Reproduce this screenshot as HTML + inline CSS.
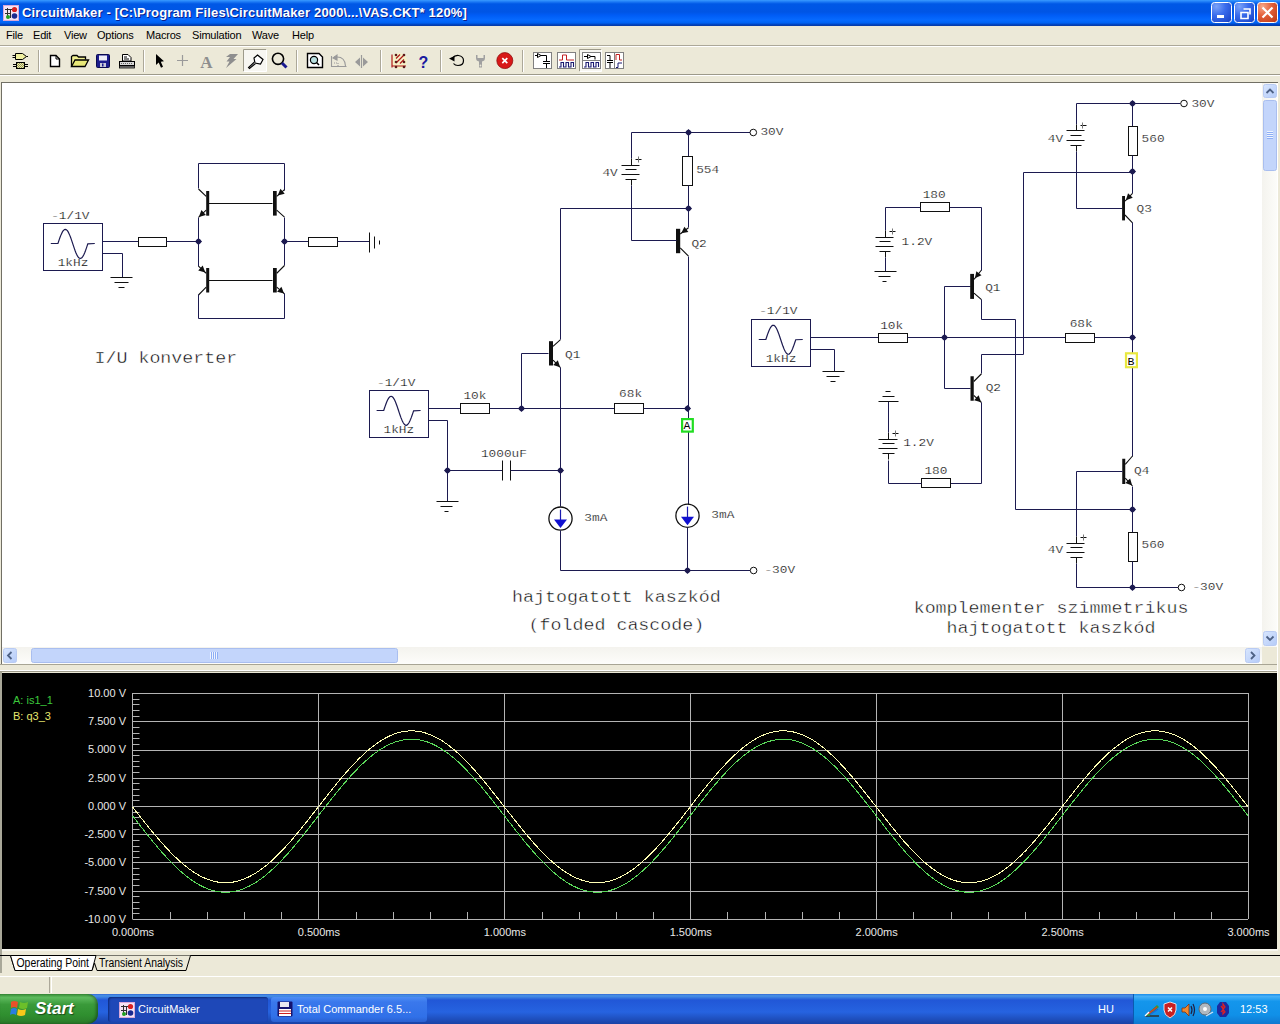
<!DOCTYPE html>
<html><head><meta charset="utf-8">
<style>
*{margin:0;padding:0;box-sizing:border-box}
html,body{width:1280px;height:1024px;overflow:hidden;background:#ECE9D8;font-family:"Liberation Sans",sans-serif;}
.abs{position:absolute}
#title{left:0;top:0;width:1280px;height:26px;background:linear-gradient(#3A9BFF 0%,#1D7AF5 7%,#0058E6 15%,#0055E5 46%,#005CF5 58%,#066AFF 77%,#0062F2 88%,#0046C4 94%,#0838A0 100%);}
#title .t{left:22px;top:5px;color:#fff;font-size:13px;font-weight:bold;letter-spacing:0.16px;text-shadow:1px 1px 0 #0A1E8C;white-space:nowrap}
.tb{top:2px;width:21px;height:21px;border:1px solid #fff;border-radius:3px;}
#menu{left:0;top:26px;width:1280px;height:20px;}
#menu span{position:absolute;top:3px;font-size:11px;letter-spacing:-0.2px;color:#000}
#toolbar{left:0;top:46px;width:1280px;height:29px;border-top:1px solid #fff;}
.sep{top:50px;width:2px;height:21px;border-left:1px solid #ACA899;border-right:1px solid #fff}
#canvas{left:1px;top:82px;width:1277px;height:583px;background:#fff;border-top:1px solid #716F64;border-left:1px solid #716F64}
#wave{left:2px;top:673px;width:1275px;height:276px;background:#000;overflow:hidden}
#taskbar{left:0;top:994px;width:1280px;height:30px;background:linear-gradient(#3168D5 0%,#4993E6 6%,#2157D7 20%,#2663E0 60%,#1941A5 100%)}
</style></head><body>
<div id="title" class="abs">
  <svg class="abs" style="left:3px;top:5px" width="16" height="16">
<rect x="0" y="0" width="16" height="16" fill="#F4E4F4"/><rect x="0.5" y="0.5" width="15" height="15" fill="none" stroke="#D8A8D8"/>
<path d="M2 4.5 H10 M4.5 3 V13 M7.5 4.5 V13 M2 8.5 H7" stroke="#303030" stroke-width="1"/>
<circle cx="11.5" cy="4.5" r="2.6" fill="#D82020"/><circle cx="11.5" cy="11" r="2.8" fill="#1A2A90"/><circle cx="5" cy="12" r="2" fill="#20A020"/>
</svg>
  <div class="t abs">CircuitMaker - [C:\Program Files\CircuitMaker 2000\...\VAS.CKT* 120%]</div>
  <svg class="abs" style="left:1210px;top:1px" width="70" height="24">
  <defs>
   <radialGradient id="bb" cx="0.25" cy="0.2" r="1"><stop offset="0" stop-color="#7AA2F8"/><stop offset="0.45" stop-color="#3A6CEC"/><stop offset="1" stop-color="#1A44C8"/></radialGradient>
   <radialGradient id="rb" cx="0.25" cy="0.2" r="1"><stop offset="0" stop-color="#F8A888"/><stop offset="0.45" stop-color="#E4603A"/><stop offset="1" stop-color="#C03C18"/></radialGradient>
  </defs>
  <rect x="1.5" y="1.5" width="20" height="20" rx="3" fill="url(#bb)" stroke="#fff"/>
  <rect x="7" y="14" width="7" height="3" fill="#fff"/>
  <rect x="24.5" y="1.5" width="20" height="20" rx="3" fill="url(#bb)" stroke="#fff"/>
  <path d="M31 11.5 h7 v6 h-7 z" fill="none" stroke="#fff" stroke-width="1.6"/>
  <path d="M33.5 8 h6.5 v5.5" fill="none" stroke="#fff" stroke-width="1.6"/>
  <rect x="47.5" y="1.5" width="20" height="20" rx="3" fill="url(#rb)" stroke="#fff"/>
  <path d="M52.5 6.5 L62.5 16.5 M62.5 6.5 L52.5 16.5" stroke="#fff" stroke-width="2.2"/>
  </svg>
</div>
<div id="menu" class="abs">
  <span style="left:6px">File</span>
  <span style="left:33px">Edit</span>
  <span style="left:64px">View</span>
  <span style="left:97px">Options</span>
  <span style="left:146px">Macros</span>
  <span style="left:192px">Simulation</span>
  <span style="left:252px">Wave</span>
  <span style="left:292px">Help</span>
</div>
<div class="abs" style="left:0;top:45px;width:1280px;height:1px;background:#ACA899"></div>
<div id="toolbar" class="abs"></div>
<svg class="abs" style="left:0;top:0" width="640" height="80">
<defs>
<pattern id="chk" width="2" height="2" patternUnits="userSpaceOnUse"><rect width="2" height="2" fill="#F0F0A0"/><rect width="1" height="1" fill="#909060"/><rect x="1" y="1" width="1" height="1" fill="#909060"/></pattern>
</defs>
<!-- grip / separators -->
<g stroke-width="1">
<path d="M38.5 50 V72" stroke="#ACA899"/><path d="M39.5 50 V72" stroke="#fff"/>
<path d="M143.5 50 V72" stroke="#ACA899"/><path d="M144.5 50 V72" stroke="#fff"/>
<path d="M296.5 50 V72" stroke="#ACA899"/><path d="M297.5 50 V72" stroke="#fff"/>
<path d="M380.5 50 V72" stroke="#ACA899"/><path d="M381.5 50 V72" stroke="#fff"/>
<path d="M440.5 50 V72" stroke="#ACA899"/><path d="M441.5 50 V72" stroke="#fff"/>
<path d="M522.5 50 V72" stroke="#ACA899"/><path d="M523.5 50 V72" stroke="#fff"/>
</g>
<!-- pressed buttons -->
<rect x="243.5" y="49.5" width="23" height="22" fill="#F7F6F1" stroke="none"/>
<path d="M243.5 71.5 V49.5 H266.5" stroke="#9D9A8A" fill="none"/>
<path d="M243.5 71.5 H266.5 V49.5" stroke="#fff" fill="none"/>
<rect x="579.5" y="49.5" width="22" height="22" fill="#F7F6F1" stroke="none"/>
<path d="M579.5 71.5 V49.5 H601.5" stroke="#9D9A8A" fill="none"/>
<path d="M579.5 71.5 H601.5 V49.5" stroke="#fff" fill="none"/>
<!-- 1 components -->
<g stroke="#000" stroke-width="1">
<path d="M15.5 53.5 H22.5 L26.5 56.5 L22.5 59.5 H15.5 Z" fill="#F0F0A0"/>
<path d="M12.5 55.5 H15 M12.5 57.5 H15 M26.5 56.5 H28" />
<rect x="16.5" y="62.5" width="8" height="6" fill="url(#chk)"/>
<path d="M13 64.5 H16 M13 66.5 H16 M25 64.5 H28 M25 66.5 H28"/>
</g>
<!-- 2 new doc -->
<path d="M50.5 55.5 H56 L59.5 59 V66.5 H50.5 Z" fill="#fff" stroke="#000" stroke-width="1.4"/>
<path d="M56 55.5 V59 H59.5" fill="none" stroke="#000"/>
<!-- 3 folder -->
<path d="M71.5 66.5 V56.5 L73 55.5 H77 L78.5 57 H85.5 V59.5" fill="#F0F090" stroke="#000" stroke-width="1.3"/>
<path d="M71.5 66.5 L75 60 H88.5 L85 66.5 Z" fill="#E8E878" stroke="#000" stroke-width="1.3"/>
<!-- 4 floppy -->
<rect x="96.5" y="54.5" width="13" height="13" rx="1" fill="#1C1C8C" stroke="#0A0A50"/>
<rect x="99" y="55.5" width="8" height="5" fill="#EEEEF8"/>
<rect x="100" y="63" width="6" height="4" fill="#C8C8D8"/>
<rect x="102" y="63.5" width="1.5" height="3" fill="#1C1C8C"/>
<!-- 5 printer -->
<path d="M122.5 54.5 H128 L131 57.5 V61 H122.5 Z" fill="#fff" stroke="#000"/>
<path d="M124 57 H127 M124 59 H129" stroke="#000"/>
<rect x="119.5" y="61.5" width="15" height="4" fill="#D8D8D8" stroke="#000"/>
<path d="M121 63.5 H133" stroke="#666" stroke-dasharray="1 1"/>
<rect x="119.5" y="66" width="15" height="2" fill="#999" stroke="#000" stroke-width=".8"/>
<!-- 6 arrow -->
<path d="M156 54 L156 65 L158.7 62.5 L161 67.8 L163 66.8 L160.8 61.8 L164 61.3 Z" fill="#000"/>
<!-- 7 plus -->
<path d="M177 60.5 H188 M182.5 55 V66" stroke="#9A9A9A" stroke-width="1.2"/>
<!-- 8 A -->
<text x="206.5" y="68" text-anchor="middle" font-family="Liberation Serif" font-weight="bold" font-size="17" fill="#8E8E8E">A</text>
<!-- 9 lightning -->
<path d="M230 54 H238 L233.5 59 H236.5 L226 68 L229.5 61.5 H226.5 L230 57 H226 Z" fill="#8E8E8E"/>
<!-- 10 probe -->
<path d="M257.5 55 L263 59.5 L260.5 64 L255 63 L254 58 Z" fill="#fff" stroke="#000" stroke-width="1.2"/>
<path d="M255.5 63.5 L249.5 68.5 L248.5 67.5 L254.5 62" fill="#fff" stroke="#000" stroke-width="1.1"/>
<!-- 11 magnifier -->
<circle cx="278" cy="58.8" r="5.6" fill="none" stroke="#000" stroke-width="1.6"/>
<path d="M282 63 L286.5 67.5" stroke="#1A1A90" stroke-width="3"/>
<!-- 12 zoom page -->
<path d="M307.5 53.5 H319 L322.5 57 V67.5 H307.5 Z" fill="#fff" stroke="#000" stroke-width="1.4"/>
<circle cx="314" cy="60" r="3.6" fill="#B8E0E0" stroke="#000" stroke-width="1.2"/>
<path d="M316.5 62.5 L319 65" stroke="#000" stroke-width="1.6"/>
<!-- 13 rotate gray -->
<g stroke="#9A9A9A" fill="none" stroke-width="1.1">
<path d="M331.5 56 V66.5 H346.5"/>
<path d="M334 57 H337 Q345 57 345.5 66"/>
<path d="M333 58 L337 55 L337 60 Z" fill="#9A9A9A"/>
<path d="M334 63 H338 V66" stroke-dasharray="1 1"/>
</g>
<!-- 14 mirror gray -->
<path d="M361.5 55 V68" stroke="#9A9A9A" stroke-width="1.2"/>
<path d="M360 57.5 L355 62 L360 66.5 Z M363 57.5 L368 62 L363 66.5 Z" fill="#9A9A9A"/>
<!-- 15 netlist -->
<circle cx="399" cy="61" r="8" fill="#F8F4C0" opacity=".7"/>
<g stroke="#B01818" stroke-width="1.2" fill="none">
<path d="M392 54.5 V67.5 M392 66 H406 M396 63 L404 55 M396 58.5 L400 54.5 M400 63.5 L404 59.5"/>
</g>
<g fill="#5A1A1A"><circle cx="396" cy="55" r="1.3"/><circle cx="404" cy="55" r="1.3"/><circle cx="396" cy="62" r="1.3"/><circle cx="404" cy="62" r="1.3"/><circle cx="396" cy="67" r="1.3"/><circle cx="404" cy="67" r="1.3"/></g>
<!-- 16 ? -->
<text x="423.5" y="67.5" text-anchor="middle" font-family="Liberation Sans" font-weight="bold" font-size="16" fill="#1A1AA0">?</text>
<!-- 17 undo -->
<path d="M452 58.5 Q455 55 458.5 55.5 Q463.5 56.5 463.5 60.5 Q463.5 65.5 458 65.5 Q455 65.5 453.5 63.5" fill="none" stroke="#000" stroke-width="1.2"/>
<path d="M449 58.5 L454.5 56 L454.5 61.5 Z" fill="#000"/>
<!-- 18 wrench gray -->
<path d="M476 55 V58 Q476 61 479 61.5 V67.5 H482 V61.5 Q485 61 485 58 V55 L483.5 55 V58 H477.5 V55 Z" fill="#A0A0A0"/>
<circle cx="480.5" cy="65.5" r=".9" fill="#ECE9D8"/>
<!-- 19 stop -->
<circle cx="504.8" cy="60.6" r="8" fill="#D81818"/>
<circle cx="504.8" cy="60.6" r="8" fill="none" stroke="#901010" stroke-width=".8"/>
<path d="M502.3 58.1 L507.3 63.1 M507.3 58.1 L502.3 63.1" stroke="#fff" stroke-width="1.7"/>
<!-- 20 box schematic -->
<rect x="533.5" y="52.5" width="18" height="16" fill="#fff" stroke="#808080"/>
<g stroke="#000" fill="none" stroke-width="1">
<path d="M535 55.5 H537.5 M537.5 53.5 V57.5 L541 55.5 L537.5 53.5 M541 55.5 H546.5 V61 M543 61.5 H550 M543 63.5 H550 M546.5 63.5 V68"/>
</g>
<!-- 21 pulses -->
<rect x="557.5" y="52.5" width="18" height="16" fill="#fff" stroke="#808080"/>
<path d="M559 60 H562.5 V55 H566.5 V60 H574" stroke="#C02020" fill="none"/>
<path d="M559 67 H561 V62.5 H563.5 V67 H566 V62.5 H568.5 V67 H571 V62.5 H573.5 V67" stroke="#1A1A70" fill="none" stroke-width="1.1"/>
<!-- 22 pressed: gate + pulses -->
<rect x="582.5" y="52.5" width="18" height="16" fill="#fff" stroke="#808080"/>
<path d="M582.5 60.5 H600.5" stroke="#808080"/>
<path d="M584 56.5 H587.5 M587.5 54.5 V58.5 L591 56.5 L587.5 54.5 M591 56.5 H595 V59.5" stroke="#000" fill="none"/>
<path d="M584 67 H586 V62.5 H588.5 V67 H591 V62.5 H593.5 V67 H596 V62.5 H598.5 V67" stroke="#1A1A70" fill="none" stroke-width="1.1"/>
<!-- 23 cap + pulse -->
<rect x="605.5" y="52.5" width="18" height="16" fill="#fff" stroke="#808080"/>
<path d="M614.5 52.5 V68.5" stroke="#808080"/>
<path d="M607 55.5 H610 V60 M607 60.5 H613 M607 62.5 H613 M610 62.5 V68" stroke="#000" fill="none"/>
<path d="M616 60 V54.5 H619.5 V60 H622" stroke="#C02020" fill="none"/>
<path d="M616 67.5 H618 V63 H622" stroke="#1A1A70" fill="none"/>
</svg>

<div class="abs" style="left:0;top:74px;width:1280px;height:1px;background:#9D9A8A"></div><div class="abs" style="left:0;top:75px;width:1280px;height:1px;background:#fff"></div>
<div id="canvas" class="abs"></div>
<svg class="abs" style="left:0;top:0" width="1262" height="647"><g fill="none" stroke-width="1" font-family="Liberation Mono"><rect x="43.5" y="223.5" width="59.0" height="47.0" fill="none" stroke="#1C1A50"/><path d="M50.8 243.5 L57.8 243.5 L57.80 243.90 L58.55 241.63 L59.30 239.42 L60.05 237.32 L60.80 235.38 L61.55 233.65 L62.30 232.17 L63.05 230.98 L63.80 230.11 L64.55 229.58 L65.30 229.40 L66.05 229.58 L66.80 230.11 L67.55 230.98 L68.30 232.17 L69.05 233.65 L69.80 235.38 L70.55 237.32 L71.30 239.42 L72.05 241.63 L72.80 243.90 L73.55 246.17 L74.30 248.38 L75.05 250.48 L75.80 252.42 L76.55 254.15 L77.30 255.63 L78.05 256.82 L78.80 257.69 L79.55 258.22 L80.30 258.40 L81.05 258.22 L81.80 257.69 L82.55 256.82 L83.30 255.63 L84.05 254.15 L84.80 252.42 L85.55 250.48 L86.30 248.38 L87.05 246.17 L87.80 243.90 L94.8 243.5" stroke="#1C1A50" stroke-width="1.2"/><text transform="translate(51.20 218.6) scale(1 0.9)" font-size="12.8" fill="#0A0A0A" stroke="#fff" stroke-width="0.25">-1/1V</text><text transform="translate(57.70 266.4) scale(1 0.9)" font-size="12.8" fill="#0A0A0A" stroke="#fff" stroke-width="0.25">1kHz</text><path d="M102.5 241.5 L138.5 241.5" stroke="#1C1A50"/><rect x="138.5" y="237.5" width="28.0" height="9.0" fill="#fff" stroke="#101010"/><path d="M166.5 241.5 L198.5 241.5" stroke="#1C1A50"/><path d="M102.5 253.5 L122.5 253.5 L122.5 277.5" stroke="#1C1A50"/><path d="M110.5 277.5 L132.5 277.5" stroke="#101010"/><path d="M114.5 282.5 L128.5 282.5" stroke="#101010"/><path d="M118.5 287.5 L124.5 287.5" stroke="#101010"/><path d="M198.5 163.5 L284.5 163.5" stroke="#1C1A50"/><path d="M198.5 163.5 L198.5 188.5" stroke="#1C1A50"/><path d="M284.5 163.5 L284.5 190.5" stroke="#1C1A50"/><rect x="206.20" y="191.00" width="3.00" height="24.70" fill="#101010"/><path d="M206.20 196.35 L198.5 189.00 M206.20 210.15 L198.5 217.30" stroke="#101010" stroke-width="1.1"/><path d="M198.88 216.94 L201.40 210.10 L205.89 214.94 Z" fill="#101010" stroke="none"/><rect x="273.00" y="191.00" width="3.70" height="24.60" fill="#101010"/><path d="M276.70 196.30 L284.5 189.70 M276.70 210.10 L284.5 217.10" stroke="#101010" stroke-width="1.1"/><path d="M277.64 195.51 L284.73 193.83 L280.47 188.79 Z" fill="#101010" stroke="none"/><path d="M208.5 203.5 L272.5 203.5" stroke="#101010"/><path d="M198.5 217.5 L198.5 266.5" stroke="#1C1A50"/><path d="M284.5 217.5 L284.5 265.5" stroke="#1C1A50"/><path d="M194.9 241.5 L198.5 237.9 L202.1 241.5 L198.5 245.1 Z" fill="#1C1A50" stroke="none"/><circle cx="198.5" cy="241.5" r="2.4" fill="#1C1A50"/><path d="M280.9 241.5 L284.5 237.9 L288.1 241.5 L284.5 245.1 Z" fill="#1C1A50" stroke="none"/><circle cx="284.5" cy="241.5" r="2.4" fill="#1C1A50"/><rect x="206.20" y="268.00" width="3.00" height="24.50" fill="#101010"/><path d="M206.20 273.25 L198.5 266.20 M206.20 287.05 L198.5 295.00" stroke="#101010" stroke-width="1.1"/><path d="M205.28 272.40 L202.71 265.58 L198.25 270.45 Z" fill="#101010" stroke="none"/><rect x="273.00" y="268.00" width="3.75" height="24.50" fill="#101010"/><path d="M276.75 273.25 L284.5 265.50 M276.75 287.05 L284.5 293.80" stroke="#101010" stroke-width="1.1"/><path d="M284.11 293.46 L277.04 291.68 L281.38 286.70 Z" fill="#101010" stroke="none"/><path d="M208.5 280.5 L272.5 280.5" stroke="#101010"/><path d="M198.5 294.5 L198.5 318.5 L284.5 318.5 L284.5 293.5" stroke="#1C1A50"/><path d="M284.5 241.5 L308.5 241.5" stroke="#1C1A50"/><rect x="308.5" y="237.5" width="29.0" height="9.0" fill="#fff" stroke="#101010"/><path d="M337.5 241.5 L369.5 241.5" stroke="#1C1A50"/><path d="M369.5 232.5 L369.5 252.5" stroke="#101010"/><path d="M374.5 236.5 L374.5 248.5" stroke="#101010"/><path d="M379.5 240.5 L379.5 244.5" stroke="#101010"/><text transform="translate(94.40 363) scale(1 0.89)" font-size="18.33" fill="#0A0A0A" stroke="#fff" stroke-width="0.45">I/U konverter</text><rect x="369.5" y="390.5" width="59.0" height="47.0" fill="none" stroke="#1C1A50"/><path d="M376.6 410.5 L383.6 410.5 L383.60 410.80 L384.35 408.53 L385.10 406.32 L385.85 404.22 L386.60 402.28 L387.35 400.55 L388.10 399.07 L388.85 397.88 L389.60 397.01 L390.35 396.48 L391.10 396.30 L391.85 396.48 L392.60 397.01 L393.35 397.88 L394.10 399.07 L394.85 400.55 L395.60 402.28 L396.35 404.22 L397.10 406.32 L397.85 408.53 L398.60 410.80 L399.35 413.07 L400.10 415.28 L400.85 417.38 L401.60 419.32 L402.35 421.05 L403.10 422.53 L403.85 423.72 L404.60 424.59 L405.35 425.12 L406.10 425.30 L406.85 425.12 L407.60 424.59 L408.35 423.72 L409.10 422.53 L409.85 421.05 L410.60 419.32 L411.35 417.38 L412.10 415.28 L412.85 413.07 L413.60 410.80 L420.6 410.5" stroke="#1C1A50" stroke-width="1.2"/><text transform="translate(377.00 385.5) scale(1 0.9)" font-size="12.8" fill="#0A0A0A" stroke="#fff" stroke-width="0.25">-1/1V</text><text transform="translate(383.50 433.3) scale(1 0.9)" font-size="12.8" fill="#0A0A0A" stroke="#fff" stroke-width="0.25">1kHz</text><path d="M428.5 408.5 L460.5 408.5" stroke="#1C1A50"/><rect x="460.5" y="403.5" width="29.0" height="10.0" fill="#fff" stroke="#101010"/><text transform="translate(463.40 398.7) scale(1 0.9)" font-size="12.8" fill="#0A0A0A" stroke="#fff" stroke-width="0.25">10k</text><path d="M489.5 408.5 L614.5 408.5" stroke="#1C1A50"/><rect x="614.5" y="403.5" width="29.0" height="10.0" fill="#fff" stroke="#101010"/><text transform="translate(619.10 397.3) scale(1 0.9)" font-size="12.8" fill="#0A0A0A" stroke="#fff" stroke-width="0.25">68k</text><path d="M643.5 408.5 L687.5 408.5" stroke="#1C1A50"/><path d="M517.9 408.5 L521.5 404.9 L525.1 408.5 L521.5 412.1 Z" fill="#1C1A50" stroke="none"/><circle cx="521.5" cy="408.5" r="2.4" fill="#1C1A50"/><path d="M521.5 408.5 L521.5 353.5 L548.5 353.5" stroke="#1C1A50"/><rect x="549.00" y="341.20" width="4.00" height="24.30" fill="#101010"/><path d="M553.00 346.35 L560.5 339.60 M553.00 360.15 L560.5 367.60" stroke="#101010" stroke-width="1.1"/><path d="M560.12 367.23 L553.19 364.99 L557.84 360.31 Z" fill="#101010" stroke="none"/><text transform="translate(565.00 358.4) scale(1 0.9)" font-size="12.8" fill="#0A0A0A" stroke="#fff" stroke-width="0.25">Q1</text><path d="M560.5 339.5 L560.5 208.5 L688.5 208.5" stroke="#1C1A50"/><path d="M684.9 208.5 L688.5 204.9 L692.1 208.5 L688.5 212.1 Z" fill="#1C1A50" stroke="none"/><circle cx="688.5" cy="208.5" r="2.4" fill="#1C1A50"/><path d="M560.5 367.5 L560.5 506.5" stroke="#1C1A50"/><path d="M556.9 470.5 L560.5 466.9 L564.1 470.5 L560.5 474.1 Z" fill="#1C1A50" stroke="none"/><circle cx="560.5" cy="470.5" r="2.4" fill="#1C1A50"/><path d="M428.5 420.5 L447.5 420.5 L447.5 501.5" stroke="#1C1A50"/><path d="M436.5 501.5 L458.5 501.5" stroke="#101010"/><path d="M440.5 506.5 L452.5 506.5" stroke="#101010"/><path d="M444.5 511.5 L448.5 511.5" stroke="#101010"/><path d="M443.9 470.5 L447.5 466.9 L451.1 470.5 L447.5 474.1 Z" fill="#1C1A50" stroke="none"/><circle cx="447.5" cy="470.5" r="2.4" fill="#1C1A50"/><path d="M447.5 470.5 L502.5 470.5" stroke="#1C1A50"/><path d="M502.5 460.5 L502.5 480.5" stroke="#101010"/><path d="M510.5 460.5 L510.5 480.5" stroke="#101010"/><path d="M510.5 470.5 L560.5 470.5" stroke="#1C1A50"/><text transform="translate(480.90 457) scale(1 0.9)" font-size="12.8" fill="#0A0A0A" stroke="#fff" stroke-width="0.25">1000uF</text><circle cx="560.5" cy="518.6" r="11.6" fill="none" stroke="#101010" stroke-width="1.3"/><path d="M560.5 509.5 V520.6" stroke="#1A1AB0" stroke-width="1.2"/><path d="M554.0 519.6 L567.0 519.6 L560.5 528.1 Z" fill="#1010D0" stroke="none"/><path d="M560.5 530.5 L560.5 570.5" stroke="#1C1A50"/><text transform="translate(584.30 521) scale(1 0.9)" font-size="12.8" fill="#0A0A0A" stroke="#fff" stroke-width="0.25">3mA</text><path d="M560.5 570.5 L750.5 570.5" stroke="#1C1A50"/><circle cx="753.6" cy="570.5" r="3.3" fill="#fff" stroke="#101010"/><path d="M683.9 570.5 L687.5 566.9 L691.1 570.5 L687.5 574.1 Z" fill="#1C1A50" stroke="none"/><circle cx="687.5" cy="570.5" r="2.4" fill="#1C1A50"/><text transform="translate(764.40 573) scale(1 0.9)" font-size="12.8" fill="#0A0A0A" stroke="#fff" stroke-width="0.25">-30V</text><path d="M631.5 132.5 L750.5 132.5" stroke="#1C1A50"/><circle cx="753.3" cy="132.5" r="3.3" fill="#fff" stroke="#101010"/><path d="M684.9 132.5 L688.5 128.9 L692.1 132.5 L688.5 136.1 Z" fill="#1C1A50" stroke="none"/><circle cx="688.5" cy="132.5" r="2.4" fill="#1C1A50"/><text transform="translate(760.40 134.8) scale(1 0.9)" font-size="12.8" fill="#0A0A0A" stroke="#fff" stroke-width="0.25">30V</text><path d="M631.5 132.5 L631.5 158.5" stroke="#1C1A50"/><path d="M631.5 158.5 L631.5 165.5" stroke="#101010"/><path d="M621.5 165.5 L639.5 165.5" stroke="#101010"/><path d="M625.5 169.5 L636.5 169.5" stroke="#101010"/><path d="M621.5 174.5 L639.5 174.5" stroke="#101010"/><path d="M625.5 179.5 L636.5 179.5" stroke="#101010"/><path d="M631.5 179.5 L631.5 185.5" stroke="#101010"/><path d="M635.5 159.5 L641.5 159.5" stroke="#101010"/><path d="M638.5 156.5 L638.5 162.5" stroke="#777"/><path d="M631.5 185.5 L631.5 240.5" stroke="#1C1A50"/><text transform="translate(602.40 175.5) scale(1 0.9)" font-size="12.8" fill="#0A0A0A" stroke="#fff" stroke-width="0.25">4V</text><path d="M688.5 132.5 L688.5 156.5" stroke="#1C1A50"/><rect x="682.5" y="156.5" width="10.0" height="29.0" fill="#fff" stroke="#101010"/><path d="M688.5 185.5 L688.5 208.5" stroke="#1C1A50"/><text transform="translate(696.20 173) scale(1 0.9)" font-size="12.8" fill="#0A0A0A" stroke="#fff" stroke-width="0.25">554</text><path d="M688.5 208.5 L688.5 227.5" stroke="#1C1A50"/><rect x="676.00" y="228.80" width="4.20" height="24.40" fill="#101010"/><path d="M680.20 234.00 L688.5 227.80 M680.20 247.80 L688.5 256.20" stroke="#101010" stroke-width="1.1"/><path d="M681.20 233.26 L688.38 232.01 L684.43 226.72 Z" fill="#101010" stroke="none"/><path d="M631.5 240.5 L676.5 240.5" stroke="#1C1A50"/><text transform="translate(691.40 246.5) scale(1 0.9)" font-size="12.8" fill="#0A0A0A" stroke="#fff" stroke-width="0.25">Q2</text><path d="M688.5 256.5 L688.5 504.5" stroke="#1C1A50"/><path d="M683.9 408.5 L687.5 404.9 L691.1 408.5 L687.5 412.1 Z" fill="#1C1A50" stroke="none"/><circle cx="687.5" cy="408.5" r="2.4" fill="#1C1A50"/><rect x="682.1" y="419.1" width="10.699999999999932" height="12.5" fill="#fff" stroke="#22DD22" stroke-width="2.2"/><text transform="translate(683.40 429.1) scale(1 1.0)" font-size="11.5" fill="#000">A</text><circle cx="687.5" cy="515.7" r="11.6" fill="none" stroke="#101010" stroke-width="1.3"/><path d="M687.5 506.6 V517.7" stroke="#1A1AB0" stroke-width="1.2"/><path d="M681.0 516.7 L694.0 516.7 L687.5 525.2 Z" fill="#1010D0" stroke="none"/><path d="M687.5 527.5 L687.5 570.5" stroke="#1C1A50"/><text transform="translate(711.30 518.2) scale(1 0.9)" font-size="12.8" fill="#0A0A0A" stroke="#fff" stroke-width="0.25">3mA</text><text transform="translate(511.92 602.3) scale(1 0.89)" font-size="18.33" fill="#0A0A0A" stroke="#fff" stroke-width="0.45">hajtogatott kaszkód</text><text transform="translate(528.42 629.8) scale(1 0.89)" font-size="18.33" fill="#0A0A0A" stroke="#fff" stroke-width="0.45">(folded cascode)</text><rect x="751.5" y="319.5" width="59.0" height="47.0" fill="none" stroke="#1C1A50"/><path d="M758.75 339.5 L765.75 339.5 L765.75 339.75 L766.50 337.48 L767.25 335.27 L768.00 333.17 L768.75 331.23 L769.50 329.50 L770.25 328.02 L771.00 326.83 L771.75 325.96 L772.50 325.43 L773.25 325.25 L774.00 325.43 L774.75 325.96 L775.50 326.83 L776.25 328.02 L777.00 329.50 L777.75 331.23 L778.50 333.17 L779.25 335.27 L780.00 337.48 L780.75 339.75 L781.50 342.02 L782.25 344.23 L783.00 346.33 L783.75 348.27 L784.50 350.00 L785.25 351.48 L786.00 352.67 L786.75 353.54 L787.50 354.07 L788.25 354.25 L789.00 354.07 L789.75 353.54 L790.50 352.67 L791.25 351.48 L792.00 350.00 L792.75 348.27 L793.50 346.33 L794.25 344.23 L795.00 342.02 L795.75 339.75 L802.75 339.5" stroke="#1C1A50" stroke-width="1.2"/><text transform="translate(759.15 314.45) scale(1 0.9)" font-size="12.8" fill="#0A0A0A" stroke="#fff" stroke-width="0.25">-1/1V</text><text transform="translate(765.65 362.25) scale(1 0.9)" font-size="12.8" fill="#0A0A0A" stroke="#fff" stroke-width="0.25">1kHz</text><path d="M810.5 337.5 L878.5 337.5" stroke="#1C1A50"/><rect x="878.5" y="333.5" width="29.0" height="9.0" fill="#fff" stroke="#101010"/><text transform="translate(880.15 328.75) scale(1 0.9)" font-size="12.8" fill="#0A0A0A" stroke="#fff" stroke-width="0.25">10k</text><path d="M907.5 337.5 L1065.5 337.5" stroke="#1C1A50"/><rect x="1065.5" y="333.5" width="29.0" height="9.0" fill="#fff" stroke="#101010"/><text transform="translate(1069.70 326.6) scale(1 0.9)" font-size="12.8" fill="#0A0A0A" stroke="#fff" stroke-width="0.25">68k</text><path d="M1094.5 337.5 L1132.5 337.5" stroke="#1C1A50"/><path d="M940.9 337.5 L944.5 333.9 L948.1 337.5 L944.5 341.1 Z" fill="#1C1A50" stroke="none"/><circle cx="944.5" cy="337.5" r="2.4" fill="#1C1A50"/><path d="M1128.9 337.5 L1132.5 333.9 L1136.1 337.5 L1132.5 341.1 Z" fill="#1C1A50" stroke="none"/><circle cx="1132.5" cy="337.5" r="2.4" fill="#1C1A50"/><path d="M810.5 349.5 L834.5 349.5 L834.5 371.5" stroke="#1C1A50"/><path d="M822.5 371.5 L844.5 371.5" stroke="#101010"/><path d="M826.5 376.5 L839.5 376.5" stroke="#101010"/><path d="M830.5 381.5 L835.5 381.5" stroke="#101010"/><path d="M970.5 286.5 L944.5 286.5 L944.5 388.5 L970.5 388.5" stroke="#1C1A50"/><rect x="970.20" y="273.90" width="3.80" height="25.00" fill="#101010"/><path d="M974.00 279.40 L981.5 270.00 M974.00 293.20 L981.5 299.70" stroke="#101010" stroke-width="1.1"/><path d="M974.90 278.27 L981.53 275.25 L976.37 271.13 Z" fill="#101010" stroke="none"/><text transform="translate(985.20 291) scale(1 0.9)" font-size="12.8" fill="#0A0A0A" stroke="#fff" stroke-width="0.25">Q1</text><path d="M981.5 270.5 L981.5 207.5 L949.5 207.5" stroke="#1C1A50"/><rect x="920.5" y="202.5" width="29.0" height="9.0" fill="#fff" stroke="#101010"/><text transform="translate(922.70 197.8) scale(1 0.9)" font-size="12.8" fill="#0A0A0A" stroke="#fff" stroke-width="0.25">180</text><path d="M920.5 207.5 L885.5 207.5 L885.5 230.5" stroke="#1C1A50"/><path d="M885.5 230.5 L885.5 237.5" stroke="#101010"/><path d="M875.5 237.5 L893.5 237.5" stroke="#101010"/><path d="M879.5 241.5 L890.5 241.5" stroke="#101010"/><path d="M875.5 246.5 L893.5 246.5" stroke="#101010"/><path d="M879.5 251.5 L890.5 251.5" stroke="#101010"/><path d="M885.5 251.5 L885.5 257.5" stroke="#101010"/><path d="M889.5 231.5 L895.5 231.5" stroke="#101010"/><path d="M892.5 228.5 L892.5 234.5" stroke="#777"/><path d="M885.5 257.5 L885.5 271.5" stroke="#1C1A50"/><path d="M874.5 271.5 L896.5 271.5" stroke="#101010"/><path d="M878.5 276.5 L890.5 276.5" stroke="#101010"/><path d="M882.5 281.5 L886.5 281.5" stroke="#101010"/><text transform="translate(901.60 244.7) scale(1 0.9)" font-size="12.8" fill="#0A0A0A" stroke="#fff" stroke-width="0.25">1.2V</text><path d="M981.5 299.5 L981.5 319.5 L1015.5 319.5 L1015.5 509.5 L1132.5 509.5" stroke="#1C1A50"/><rect x="970.50" y="376.25" width="3.25" height="24.50" fill="#101010"/><path d="M973.75 381.50 L981.5 373.75 M973.75 395.30 L981.5 402.50" stroke="#101010" stroke-width="1.1"/><path d="M981.11 402.14 L974.10 400.13 L978.60 395.30 Z" fill="#101010" stroke="none"/><text transform="translate(985.65 390.5) scale(1 0.9)" font-size="12.8" fill="#0A0A0A" stroke="#fff" stroke-width="0.25">Q2</text><path d="M981.5 373.5 L981.5 354.5 L1023.5 354.5 L1023.5 172.5 L1132.5 172.5" stroke="#1C1A50"/><path d="M981.5 402.5 L981.5 483.5 L950.5 483.5" stroke="#1C1A50"/><rect x="921.5" y="478.5" width="29.0" height="9.0" fill="#fff" stroke="#101010"/><text transform="translate(924.40 473.75) scale(1 0.9)" font-size="12.8" fill="#0A0A0A" stroke="#fff" stroke-width="0.25">180</text><path d="M921.5 483.5 L888.5 483.5 L888.5 460.5" stroke="#1C1A50"/><path d="M888.5 432.5 L888.5 439.5" stroke="#101010"/><path d="M878.5 439.5 L897.5 439.5" stroke="#101010"/><path d="M882.5 443.5 L894.5 443.5" stroke="#101010"/><path d="M878.5 448.5 L897.5 448.5" stroke="#101010"/><path d="M882.5 453.5 L894.5 453.5" stroke="#101010"/><path d="M888.5 453.5 L888.5 459.5" stroke="#101010"/><path d="M892.5 433.5 L898.5 433.5" stroke="#101010"/><path d="M895.5 430.5 L895.5 436.5" stroke="#777"/><path d="M888.5 432.5 L888.5 401.5" stroke="#1C1A50"/><path d="M878.5 401.5 L898.5 401.5" stroke="#101010"/><path d="M882.5 396.5 L894.5 396.5" stroke="#101010"/><path d="M885.5 391.5 L890.5 391.5" stroke="#101010"/><text transform="translate(903.15 446.25) scale(1 0.9)" font-size="12.8" fill="#0A0A0A" stroke="#fff" stroke-width="0.25">1.2V</text><path d="M1076.5 103.5 L1180.5 103.5" stroke="#1C1A50"/><circle cx="1184" cy="103.5" r="3.3" fill="#fff" stroke="#101010"/><path d="M1128.9 103.5 L1132.5 99.9 L1136.1 103.5 L1132.5 107.1 Z" fill="#1C1A50" stroke="none"/><circle cx="1132.5" cy="103.5" r="2.4" fill="#1C1A50"/><text transform="translate(1191.40 106.6) scale(1 0.9)" font-size="12.8" fill="#0A0A0A" stroke="#fff" stroke-width="0.25">30V</text><path d="M1076.5 103.5 L1076.5 124.5" stroke="#1C1A50"/><path d="M1076.5 124.5 L1076.5 130.5" stroke="#101010"/><path d="M1066.5 130.5 L1084.5 130.5" stroke="#101010"/><path d="M1070.5 135.5 L1081.5 135.5" stroke="#101010"/><path d="M1066.5 140.5 L1084.5 140.5" stroke="#101010"/><path d="M1070.5 145.5 L1081.5 145.5" stroke="#101010"/><path d="M1076.5 145.5 L1076.5 151.5" stroke="#101010"/><path d="M1080.5 125.5 L1086.5 125.5" stroke="#101010"/><path d="M1082.5 122.5 L1082.5 128.5" stroke="#777"/><path d="M1076.5 151.5 L1076.5 208.5" stroke="#1C1A50"/><path d="M1076.5 208.5 L1122.5 208.5" stroke="#1C1A50"/><text transform="translate(1047.80 142.2) scale(1 0.9)" font-size="12.8" fill="#0A0A0A" stroke="#fff" stroke-width="0.25">4V</text><path d="M1132.5 103.5 L1132.5 126.5" stroke="#1C1A50"/><rect x="1128.5" y="126.5" width="9.0" height="29.0" fill="#fff" stroke="#101010"/><path d="M1132.5 155.5 L1132.5 193.5" stroke="#1C1A50"/><path d="M1128.9 171.5 L1132.5 167.9 L1136.1 171.5 L1132.5 175.1 Z" fill="#1C1A50" stroke="none"/><circle cx="1132.5" cy="171.5" r="2.4" fill="#1C1A50"/><text transform="translate(1141.60 142.2) scale(1 0.9)" font-size="12.8" fill="#0A0A0A" stroke="#fff" stroke-width="0.25">560</text><rect x="1122.10" y="196.00" width="2.90" height="24.40" fill="#101010"/><path d="M1125.00 201.20 L1132.5 193.40 M1125.00 215.00 L1132.5 222.80" stroke="#101010" stroke-width="1.1"/><path d="M1125.90 200.26 L1132.78 197.87 L1128.03 193.29 Z" fill="#101010" stroke="none"/><text transform="translate(1136.50 212.1) scale(1 0.9)" font-size="12.8" fill="#0A0A0A" stroke="#fff" stroke-width="0.25">Q3</text><path d="M1132.5 222.5 L1132.5 456.5" stroke="#1C1A50"/><rect x="1126" y="353.3" width="10.900000000000091" height="13.899999999999977" fill="#fff" stroke="#E8E840" stroke-width="2.2"/><text transform="translate(1127.40 364.7) scale(1 1.0)" font-size="11.5" fill="#000">B</text><rect x="1122.25" y="458.75" width="3.00" height="25.25" fill="#101010"/><path d="M1125.25 464.38 L1132.5 456.00 M1125.25 478.18 L1132.5 486.00" stroke="#101010" stroke-width="1.1"/><path d="M1132.14 485.61 L1125.30 483.08 L1130.14 478.60 Z" fill="#101010" stroke="none"/><text transform="translate(1134.00 474.1) scale(1 0.9)" font-size="12.8" fill="#0A0A0A" stroke="#fff" stroke-width="0.25">Q4</text><path d="M1076.5 471.5 L1122.5 471.5" stroke="#1C1A50"/><path d="M1076.5 471.5 L1076.5 536.5" stroke="#1C1A50"/><path d="M1076.5 536.5 L1076.5 543.5" stroke="#101010"/><path d="M1066.5 543.5 L1084.5 543.5" stroke="#101010"/><path d="M1070.5 547.5 L1082.5 547.5" stroke="#101010"/><path d="M1066.5 552.5 L1084.5 552.5" stroke="#101010"/><path d="M1070.5 557.5 L1082.5 557.5" stroke="#101010"/><path d="M1076.5 557.5 L1076.5 563.5" stroke="#101010"/><path d="M1080.5 537.5 L1086.5 537.5" stroke="#101010"/><path d="M1083.5 534.5 L1083.5 540.5" stroke="#777"/><path d="M1076.5 563.5 L1076.5 587.5" stroke="#1C1A50"/><text transform="translate(1047.80 553.4) scale(1 0.9)" font-size="12.8" fill="#0A0A0A" stroke="#fff" stroke-width="0.25">4V</text><path d="M1132.5 486.5 L1132.5 532.5" stroke="#1C1A50"/><path d="M1128.9 509.5 L1132.5 505.9 L1136.1 509.5 L1132.5 513.1 Z" fill="#1C1A50" stroke="none"/><circle cx="1132.5" cy="509.5" r="2.4" fill="#1C1A50"/><rect x="1128.5" y="532.5" width="9.0" height="29.0" fill="#fff" stroke="#101010"/><path d="M1132.5 561.5 L1132.5 587.5" stroke="#1C1A50"/><text transform="translate(1141.50 547.8) scale(1 0.9)" font-size="12.8" fill="#0A0A0A" stroke="#fff" stroke-width="0.25">560</text><path d="M1076.5 587.5 L1178.5 587.5" stroke="#1C1A50"/><circle cx="1181.5" cy="587.5" r="3.3" fill="#fff" stroke="#101010"/><path d="M1128.9 587.5 L1132.5 583.9 L1136.1 587.5 L1132.5 591.1 Z" fill="#1C1A50" stroke="none"/><circle cx="1132.5" cy="587.5" r="2.4" fill="#1C1A50"/><text transform="translate(1192.40 590) scale(1 0.9)" font-size="12.8" fill="#0A0A0A" stroke="#fff" stroke-width="0.25">-30V</text><text transform="translate(913.63 612.7) scale(1 0.89)" font-size="18.33" fill="#0A0A0A" stroke="#fff" stroke-width="0.45">komplementer szimmetrikus</text><text transform="translate(946.62 633.4) scale(1 0.89)" font-size="18.33" fill="#0A0A0A" stroke="#fff" stroke-width="0.45">hajtogatott kaszkód</text></g></svg>
<svg class="abs" style="left:0;top:0" width="1280" height="680">
<defs>
<linearGradient id="vtrk" x1="0" x2="1" y1="0" y2="0"><stop offset="0" stop-color="#F4F3EE"/><stop offset="1" stop-color="#FDFDFA"/></linearGradient>
<linearGradient id="htrk" x1="0" x2="0" y1="0" y2="1"><stop offset="0" stop-color="#F4F3EE"/><stop offset="1" stop-color="#FDFDFA"/></linearGradient>
<linearGradient id="vbtn" x1="0" x2="1" y1="0" y2="1"><stop offset="0" stop-color="#D8E6FE"/><stop offset="1" stop-color="#B5CBF8"/></linearGradient>
</defs>
<!-- vertical scrollbar -->
<rect x="1262" y="83" width="16" height="564" fill="url(#vtrk)"/>
<rect x="1263.5" y="84.5" width="13" height="13" rx="2" fill="url(#vbtn)" stroke="#B9CBF3"/>
<path d="M1266.5 93 L1270 89.5 L1273.5 93" fill="none" stroke="#4D6185" stroke-width="1.8"/>
<rect x="1263.5" y="100.5" width="13" height="70" rx="2" fill="#C3D5FB" stroke="#A9BEEF"/>
<path d="M1267 132.5 H1273 M1267 134.5 H1273 M1267 136.5 H1273 M1267 138.5 H1273" stroke="#8DAEF6"/>
<path d="M1267 131.5 H1273 M1267 133.5 H1273 M1267 135.5 H1273 M1267 137.5 H1273" stroke="#EEF4FE"/>
<rect x="1263.5" y="631.5" width="13" height="14" rx="2" fill="url(#vbtn)" stroke="#B9CBF3"/>
<path d="M1266.5 636.5 L1270 640 L1273.5 636.5" fill="none" stroke="#4D6185" stroke-width="1.8"/>
<!-- horizontal scrollbar -->
<rect x="2" y="647" width="1260" height="17" fill="url(#htrk)"/>
<rect x="1262" y="647" width="16" height="17" fill="#ECE9D8"/>
<rect x="3.5" y="648.5" width="13" height="14" rx="2" fill="url(#vbtn)" stroke="#B9CBF3"/>
<path d="M11.5 652 L8 655.5 L11.5 659" fill="none" stroke="#4D6185" stroke-width="1.8"/>
<rect x="31.5" y="648.5" width="366" height="14" rx="2" fill="#C3D5FB" stroke="#A9BEEF"/>
<path d="M211.5 652 V659 M213.5 652 V659 M215.5 652 V659 M217.5 652 V659" stroke="#8DAEF6"/>
<path d="M210.5 652 V659 M212.5 652 V659 M214.5 652 V659 M216.5 652 V659" stroke="#EEF4FE"/>
<rect x="1245.5" y="648.5" width="14" height="14" rx="2" fill="url(#vbtn)" stroke="#B9CBF3"/>
<path d="M1251 652 L1254.5 655.5 L1251 659" fill="none" stroke="#4D6185" stroke-width="1.8"/>
<path d="M0 664.5 H1278" stroke="#A8A594"/>
<path d="M0 670.5 H1278" stroke="#FFFFFF"/>
<path d="M0 671.5 H1278" stroke="#9D9A8A"/>
<path d="M1277.5 83 V950" stroke="#FFFFFF"/>
</svg>
<div id="wave" class="abs"><svg width="1277" height="277" style="position:absolute;left:0;top:0"><g stroke="#B4B4B4" stroke-width="1"><line x1="130.5" y1="20.5" x2="1246.0" y2="20.5"/><line x1="130.5" y1="48.5" x2="1246.0" y2="48.5"/><line x1="130.5" y1="77.5" x2="1246.0" y2="77.5"/><line x1="130.5" y1="105.5" x2="1246.0" y2="105.5"/><line x1="130.5" y1="133.5" x2="1246.0" y2="133.5"/><line x1="130.5" y1="161.5" x2="1246.0" y2="161.5"/><line x1="130.5" y1="189.5" x2="1246.0" y2="189.5"/><line x1="130.5" y1="218.5" x2="1246.0" y2="218.5"/><line x1="130.5" y1="246.5" x2="1246.0" y2="246.5"/><line x1="130.5" y1="20.0" x2="130.5" y2="246.0"/><line x1="316.5" y1="20.0" x2="316.5" y2="246.0"/><line x1="502.5" y1="20.0" x2="502.5" y2="246.0"/><line x1="688.5" y1="20.0" x2="688.5" y2="246.0"/><line x1="874.5" y1="20.0" x2="874.5" y2="246.0"/><line x1="1060.5" y1="20.0" x2="1060.5" y2="246.0"/><line x1="1246.5" y1="20.0" x2="1246.5" y2="246.0"/><path d="M130.5 26.5h7M130.5 31.5h7M130.5 37.5h7M130.5 43.5h7M130.5 54.5h7M130.5 60.5h7M130.5 65.5h7M130.5 71.5h7M130.5 82.5h7M130.5 88.5h7M130.5 93.5h7M130.5 99.5h7M130.5 110.5h7M130.5 116.5h7M130.5 122.5h7M130.5 127.5h7M130.5 139.5h7M130.5 144.5h7M130.5 150.5h7M130.5 156.5h7M130.5 167.5h7M130.5 173.5h7M130.5 178.5h7M130.5 184.5h7M130.5 195.5h7M130.5 201.5h7M130.5 206.5h7M130.5 212.5h7M130.5 223.5h7M130.5 229.5h7M130.5 235.5h7M130.5 240.5h7M168.5 246.0v-7M205.5 246.0v-7M242.5 246.0v-7M279.5 246.0v-7M354.5 246.0v-7M391.5 246.0v-7M428.5 246.0v-7M465.5 246.0v-7M540.5 246.0v-7M577.5 246.0v-7M614.5 246.0v-7M651.5 246.0v-7M725.5 246.0v-7M763.5 246.0v-7M800.5 246.0v-7M837.5 246.0v-7M911.5 246.0v-7M949.5 246.0v-7M986.5 246.0v-7M1023.5 246.0v-7M1097.5 246.0v-7M1134.5 246.0v-7M1172.5 246.0v-7M1209.5 246.0v-7"/></g><path d="M130.5,142.7 L132.4,145.1 L134.2,147.5 L136.1,149.9 L137.9,152.3 L139.8,154.7 L141.7,157.1 L143.5,159.4 L145.4,161.7 L147.2,164.1 L149.1,166.4 L150.9,168.6 L152.8,170.9 L154.7,173.1 L156.5,175.3 L158.4,177.4 L160.2,179.6 L162.1,181.7 L164.0,183.7 L165.8,185.7 L167.7,187.7 L169.5,189.6 L171.4,191.5 L173.3,193.3 L175.1,195.1 L177.0,196.8 L178.8,198.5 L180.7,200.1 L182.6,201.7 L184.4,203.2 L186.3,204.6 L188.1,206.0 L190.0,207.3 L191.8,208.6 L193.7,209.8 L195.6,210.9 L197.4,211.9 L199.3,212.9 L201.2,213.8 L203.0,214.7 L204.9,215.5 L206.7,216.2 L208.6,216.8 L210.4,217.4 L212.3,217.9 L214.2,218.3 L216.0,218.6 L217.9,218.9 L219.7,219.1 L221.6,219.2 L223.5,219.2 L225.3,219.2 L227.2,219.1 L229.0,218.9 L230.9,218.6 L232.8,218.3 L234.6,217.9 L236.5,217.4 L238.3,216.8 L240.2,216.2 L242.1,215.5 L243.9,214.7 L245.8,213.8 L247.6,212.9 L249.5,211.9 L251.3,210.9 L253.2,209.8 L255.1,208.6 L256.9,207.3 L258.8,206.0 L260.6,204.6 L262.5,203.2 L264.4,201.7 L266.2,200.1 L268.1,198.5 L269.9,196.8 L271.8,195.1 L273.7,193.3 L275.5,191.5 L277.4,189.6 L279.2,187.7 L281.1,185.7 L282.9,183.7 L284.8,181.7 L286.7,179.6 L288.5,177.4 L290.4,175.3 L292.2,173.1 L294.1,170.9 L296.0,168.6 L297.8,166.4 L299.7,164.1 L301.5,161.7 L303.4,159.4 L305.3,157.1 L307.1,154.7 L309.0,152.3 L310.8,149.9 L312.7,147.5 L314.6,145.1 L316.4,142.7 L318.3,140.3 L320.1,137.9 L322.0,135.5 L323.9,133.1 L325.7,130.8 L327.6,128.4 L329.4,126.0 L331.3,123.7 L333.1,121.4 L335.0,119.1 L336.9,116.8 L338.7,114.6 L340.6,112.3 L342.4,110.2 L344.3,108.0 L346.2,105.9 L348.0,103.8 L349.9,101.7 L351.7,99.7 L353.6,97.8 L355.5,95.8 L357.3,94.0 L359.2,92.1 L361.0,90.3 L362.9,88.6 L364.8,87.0 L366.6,85.3 L368.5,83.8 L370.3,82.3 L372.2,80.8 L374.1,79.5 L375.9,78.1 L377.8,76.9 L379.6,75.7 L381.5,74.6 L383.4,73.5 L385.2,72.5 L387.1,71.6 L388.9,70.7 L390.8,70.0 L392.6,69.2 L394.5,68.6 L396.4,68.1 L398.2,67.6 L400.1,67.2 L401.9,66.8 L403.8,66.6 L405.7,66.4 L407.5,66.2 L409.4,66.2 L411.2,66.2 L413.1,66.4 L414.9,66.6 L416.8,66.8 L418.7,67.2 L420.5,67.6 L422.4,68.1 L424.2,68.6 L426.1,69.2 L428.0,70.0 L429.8,70.7 L431.7,71.6 L433.5,72.5 L435.4,73.5 L437.3,74.6 L439.1,75.7 L441.0,76.9 L442.8,78.1 L444.7,79.5 L446.6,80.8 L448.4,82.3 L450.3,83.8 L452.1,85.3 L454.0,87.0 L455.9,88.6 L457.7,90.3 L459.6,92.1 L461.4,94.0 L463.3,95.8 L465.1,97.8 L467.0,99.7 L468.9,101.7 L470.7,103.8 L472.6,105.9 L474.4,108.0 L476.3,110.2 L478.2,112.3 L480.0,114.6 L481.9,116.8 L483.7,119.1 L485.6,121.4 L487.5,123.7 L489.3,126.0 L491.2,128.4 L493.0,130.8 L494.9,133.1 L496.8,135.5 L498.6,137.9 L500.5,140.3 L502.3,142.7 L504.2,145.1 L506.1,147.5 L507.9,149.9 L509.8,152.3 L511.6,154.7 L513.5,157.1 L515.4,159.4 L517.2,161.7 L519.1,164.1 L520.9,166.4 L522.8,168.6 L524.6,170.9 L526.5,173.1 L528.4,175.3 L530.2,177.4 L532.1,179.6 L533.9,181.7 L535.8,183.7 L537.7,185.7 L539.5,187.7 L541.4,189.6 L543.2,191.5 L545.1,193.3 L547.0,195.1 L548.8,196.8 L550.7,198.5 L552.5,200.1 L554.4,201.7 L556.2,203.2 L558.1,204.6 L560.0,206.0 L561.8,207.3 L563.7,208.6 L565.5,209.8 L567.4,210.9 L569.3,211.9 L571.1,212.9 L573.0,213.8 L574.8,214.7 L576.7,215.5 L578.6,216.2 L580.4,216.8 L582.3,217.4 L584.1,217.9 L586.0,218.3 L587.9,218.6 L589.7,218.9 L591.6,219.1 L593.4,219.2 L595.3,219.2 L597.1,219.2 L599.0,219.1 L600.9,218.9 L602.7,218.6 L604.6,218.3 L606.5,217.9 L608.3,217.4 L610.2,216.8 L612.0,216.2 L613.9,215.5 L615.7,214.7 L617.6,213.8 L619.5,212.9 L621.3,211.9 L623.2,210.9 L625.0,209.8 L626.9,208.6 L628.8,207.3 L630.6,206.0 L632.5,204.6 L634.3,203.2 L636.2,201.7 L638.0,200.1 L639.9,198.5 L641.8,196.8 L643.6,195.1 L645.5,193.3 L647.4,191.5 L649.2,189.6 L651.1,187.7 L652.9,185.7 L654.8,183.7 L656.6,181.7 L658.5,179.6 L660.4,177.4 L662.2,175.3 L664.1,173.1 L665.9,170.9 L667.8,168.6 L669.7,166.4 L671.5,164.1 L673.4,161.7 L675.2,159.4 L677.1,157.1 L679.0,154.7 L680.8,152.3 L682.7,149.9 L684.5,147.5 L686.4,145.1 L688.2,142.7 L690.1,140.3 L692.0,137.9 L693.8,135.5 L695.7,133.1 L697.5,130.8 L699.4,128.4 L701.3,126.0 L703.1,123.7 L705.0,121.4 L706.8,119.1 L708.7,116.8 L710.6,114.6 L712.4,112.3 L714.3,110.2 L716.1,108.0 L718.0,105.9 L719.9,103.8 L721.7,101.7 L723.6,99.7 L725.4,97.8 L727.3,95.8 L729.1,94.0 L731.0,92.1 L732.9,90.3 L734.7,88.6 L736.6,87.0 L738.5,85.3 L740.3,83.8 L742.2,82.3 L744.0,80.8 L745.9,79.5 L747.7,78.1 L749.6,76.9 L751.5,75.7 L753.3,74.6 L755.2,73.5 L757.0,72.5 L758.9,71.6 L760.8,70.7 L762.6,70.0 L764.5,69.2 L766.3,68.6 L768.2,68.1 L770.0,67.6 L771.9,67.2 L773.8,66.8 L775.6,66.6 L777.5,66.4 L779.4,66.2 L781.2,66.2 L783.1,66.2 L784.9,66.4 L786.8,66.6 L788.6,66.8 L790.5,67.2 L792.4,67.6 L794.2,68.1 L796.1,68.6 L797.9,69.2 L799.8,70.0 L801.7,70.7 L803.5,71.6 L805.4,72.5 L807.2,73.5 L809.1,74.6 L811.0,75.7 L812.8,76.9 L814.7,78.1 L816.5,79.5 L818.4,80.8 L820.2,82.3 L822.1,83.8 L824.0,85.3 L825.8,87.0 L827.7,88.6 L829.5,90.3 L831.4,92.1 L833.3,94.0 L835.1,95.8 L837.0,97.8 L838.8,99.7 L840.7,101.7 L842.6,103.8 L844.4,105.9 L846.3,108.0 L848.1,110.2 L850.0,112.3 L851.9,114.6 L853.7,116.8 L855.6,119.1 L857.4,121.4 L859.3,123.7 L861.1,126.0 L863.0,128.4 L864.9,130.8 L866.7,133.1 L868.6,135.5 L870.5,137.9 L872.3,140.3 L874.2,142.7 L876.0,145.1 L877.9,147.5 L879.7,149.9 L881.6,152.3 L883.5,154.7 L885.3,157.1 L887.2,159.4 L889.0,161.7 L890.9,164.1 L892.8,166.4 L894.6,168.6 L896.5,170.9 L898.3,173.1 L900.2,175.3 L902.0,177.4 L903.9,179.6 L905.8,181.7 L907.6,183.7 L909.5,185.7 L911.4,187.7 L913.2,189.6 L915.1,191.5 L916.9,193.3 L918.8,195.1 L920.6,196.8 L922.5,198.5 L924.4,200.1 L926.2,201.7 L928.1,203.2 L929.9,204.6 L931.8,206.0 L933.7,207.3 L935.5,208.6 L937.4,209.8 L939.2,210.9 L941.1,211.9 L943.0,212.9 L944.8,213.8 L946.7,214.7 L948.5,215.5 L950.4,216.2 L952.2,216.8 L954.1,217.4 L956.0,217.9 L957.8,218.3 L959.7,218.6 L961.5,218.9 L963.4,219.1 L965.3,219.2 L967.1,219.2 L969.0,219.2 L970.8,219.1 L972.7,218.9 L974.6,218.6 L976.4,218.3 L978.3,217.9 L980.1,217.4 L982.0,216.8 L983.9,216.2 L985.7,215.5 L987.6,214.7 L989.4,213.8 L991.3,212.9 L993.1,211.9 L995.0,210.9 L996.9,209.8 L998.7,208.6 L1000.6,207.3 L1002.5,206.0 L1004.3,204.6 L1006.2,203.2 L1008.0,201.7 L1009.9,200.1 L1011.8,198.5 L1013.6,196.8 L1015.5,195.1 L1017.3,193.3 L1019.2,191.5 L1021.0,189.6 L1022.9,187.7 L1024.8,185.7 L1026.6,183.7 L1028.5,181.7 L1030.3,179.6 L1032.2,177.4 L1034.1,175.3 L1035.9,173.1 L1037.8,170.9 L1039.6,168.6 L1041.5,166.4 L1043.3,164.1 L1045.2,161.7 L1047.1,159.4 L1048.9,157.1 L1050.8,154.7 L1052.7,152.3 L1054.5,149.9 L1056.4,147.5 L1058.2,145.1 L1060.1,142.7 L1061.9,140.3 L1063.8,137.9 L1065.7,135.5 L1067.5,133.1 L1069.4,130.8 L1071.2,128.4 L1073.1,126.0 L1075.0,123.7 L1076.8,121.4 L1078.7,119.1 L1080.5,116.8 L1082.4,114.6 L1084.2,112.3 L1086.1,110.2 L1088.0,108.0 L1089.8,105.9 L1091.7,103.8 L1093.5,101.7 L1095.4,99.7 L1097.3,97.8 L1099.1,95.8 L1101.0,94.0 L1102.8,92.1 L1104.7,90.3 L1106.6,88.6 L1108.4,87.0 L1110.3,85.3 L1112.1,83.8 L1114.0,82.3 L1115.9,80.8 L1117.7,79.5 L1119.6,78.1 L1121.4,76.9 L1123.3,75.7 L1125.2,74.6 L1127.0,73.5 L1128.9,72.5 L1130.7,71.6 L1132.6,70.7 L1134.5,70.0 L1136.3,69.2 L1138.2,68.6 L1140.0,68.1 L1141.9,67.6 L1143.8,67.2 L1145.6,66.8 L1147.5,66.6 L1149.3,66.4 L1151.2,66.2 L1153.0,66.2 L1154.9,66.2 L1156.8,66.4 L1158.6,66.6 L1160.5,66.8 L1162.3,67.2 L1164.2,67.6 L1166.1,68.1 L1167.9,68.6 L1169.8,69.2 L1171.6,70.0 L1173.5,70.7 L1175.3,71.6 L1177.2,72.5 L1179.1,73.5 L1180.9,74.6 L1182.8,75.7 L1184.7,76.9 L1186.5,78.1 L1188.4,79.5 L1190.2,80.8 L1192.1,82.3 L1193.9,83.8 L1195.8,85.3 L1197.7,87.0 L1199.5,88.6 L1201.4,90.3 L1203.2,92.1 L1205.1,94.0 L1207.0,95.8 L1208.8,97.8 L1210.7,99.7 L1212.5,101.7 L1214.4,103.8 L1216.2,105.9 L1218.1,108.0 L1220.0,110.2 L1221.8,112.3 L1223.7,114.6 L1225.5,116.8 L1227.4,119.1 L1229.3,121.4 L1231.1,123.7 L1233.0,126.0 L1234.8,128.4 L1236.7,130.8 L1238.6,133.1 L1240.4,135.5 L1242.3,137.9 L1244.1,140.3 L1246.0,142.7" fill="none" stroke="#5AD85A" stroke-width="1" shape-rendering="crispEdges"/><path d="M130.5,133.8 L132.4,136.2 L134.2,138.6 L136.1,140.9 L137.9,143.3 L139.8,145.7 L141.7,148.0 L143.5,150.4 L145.4,152.7 L147.2,155.0 L149.1,157.3 L150.9,159.5 L152.8,161.7 L154.7,163.9 L156.5,166.1 L158.4,168.3 L160.2,170.4 L162.1,172.4 L164.0,174.5 L165.8,176.5 L167.7,178.4 L169.5,180.3 L171.4,182.2 L173.3,184.0 L175.1,185.8 L177.0,187.5 L178.8,189.2 L180.7,190.8 L182.6,192.3 L184.4,193.8 L186.3,195.2 L188.1,196.6 L190.0,197.9 L191.8,199.2 L193.7,200.3 L195.6,201.4 L197.4,202.5 L199.3,203.5 L201.2,204.4 L203.0,205.2 L204.9,206.0 L206.7,206.7 L208.6,207.3 L210.4,207.9 L212.3,208.4 L214.2,208.8 L216.0,209.1 L217.9,209.4 L219.7,209.6 L221.6,209.7 L223.5,209.7 L225.3,209.7 L227.2,209.6 L229.0,209.4 L230.9,209.1 L232.8,208.8 L234.6,208.4 L236.5,207.9 L238.3,207.3 L240.2,206.7 L242.1,206.0 L243.9,205.2 L245.8,204.4 L247.6,203.5 L249.5,202.5 L251.3,201.4 L253.2,200.3 L255.1,199.2 L256.9,197.9 L258.8,196.6 L260.6,195.2 L262.5,193.8 L264.4,192.3 L266.2,190.8 L268.1,189.2 L269.9,187.5 L271.8,185.8 L273.7,184.0 L275.5,182.2 L277.4,180.3 L279.2,178.4 L281.1,176.5 L282.9,174.5 L284.8,172.4 L286.7,170.4 L288.5,168.3 L290.4,166.1 L292.2,163.9 L294.1,161.7 L296.0,159.5 L297.8,157.3 L299.7,155.0 L301.5,152.7 L303.4,150.4 L305.3,148.0 L307.1,145.7 L309.0,143.3 L310.8,140.9 L312.7,138.6 L314.6,136.2 L316.4,133.8 L318.3,131.4 L320.1,129.0 L322.0,126.6 L323.9,124.3 L325.7,121.9 L327.6,119.6 L329.4,117.2 L331.3,114.9 L333.1,112.6 L335.0,110.3 L336.9,108.1 L338.7,105.8 L340.6,103.6 L342.4,101.5 L344.3,99.3 L346.2,97.2 L348.0,95.1 L349.9,93.1 L351.7,91.1 L353.6,89.2 L355.5,87.2 L357.3,85.4 L359.2,83.6 L361.0,81.8 L362.9,80.1 L364.8,78.4 L366.6,76.8 L368.5,75.3 L370.3,73.8 L372.2,72.4 L374.1,71.0 L375.9,69.7 L377.8,68.4 L379.6,67.2 L381.5,66.1 L383.4,65.1 L385.2,64.1 L387.1,63.2 L388.9,62.3 L390.8,61.6 L392.6,60.9 L394.5,60.2 L396.4,59.7 L398.2,59.2 L400.1,58.8 L401.9,58.5 L403.8,58.2 L405.7,58.0 L407.5,57.9 L409.4,57.9 L411.2,57.9 L413.1,58.0 L414.9,58.2 L416.8,58.5 L418.7,58.8 L420.5,59.2 L422.4,59.7 L424.2,60.2 L426.1,60.9 L428.0,61.6 L429.8,62.3 L431.7,63.2 L433.5,64.1 L435.4,65.1 L437.3,66.1 L439.1,67.2 L441.0,68.4 L442.8,69.7 L444.7,71.0 L446.6,72.4 L448.4,73.8 L450.3,75.3 L452.1,76.8 L454.0,78.4 L455.9,80.1 L457.7,81.8 L459.6,83.6 L461.4,85.4 L463.3,87.2 L465.1,89.2 L467.0,91.1 L468.9,93.1 L470.7,95.1 L472.6,97.2 L474.4,99.3 L476.3,101.5 L478.2,103.6 L480.0,105.8 L481.9,108.1 L483.7,110.3 L485.6,112.6 L487.5,114.9 L489.3,117.2 L491.2,119.6 L493.0,121.9 L494.9,124.3 L496.8,126.6 L498.6,129.0 L500.5,131.4 L502.3,133.8 L504.2,136.2 L506.1,138.6 L507.9,140.9 L509.8,143.3 L511.6,145.7 L513.5,148.0 L515.4,150.4 L517.2,152.7 L519.1,155.0 L520.9,157.3 L522.8,159.5 L524.6,161.7 L526.5,163.9 L528.4,166.1 L530.2,168.3 L532.1,170.4 L533.9,172.4 L535.8,174.5 L537.7,176.5 L539.5,178.4 L541.4,180.3 L543.2,182.2 L545.1,184.0 L547.0,185.8 L548.8,187.5 L550.7,189.2 L552.5,190.8 L554.4,192.3 L556.2,193.8 L558.1,195.2 L560.0,196.6 L561.8,197.9 L563.7,199.2 L565.5,200.3 L567.4,201.4 L569.3,202.5 L571.1,203.5 L573.0,204.4 L574.8,205.2 L576.7,206.0 L578.6,206.7 L580.4,207.3 L582.3,207.9 L584.1,208.4 L586.0,208.8 L587.9,209.1 L589.7,209.4 L591.6,209.6 L593.4,209.7 L595.3,209.7 L597.1,209.7 L599.0,209.6 L600.9,209.4 L602.7,209.1 L604.6,208.8 L606.5,208.4 L608.3,207.9 L610.2,207.3 L612.0,206.7 L613.9,206.0 L615.7,205.2 L617.6,204.4 L619.5,203.5 L621.3,202.5 L623.2,201.4 L625.0,200.3 L626.9,199.2 L628.8,197.9 L630.6,196.6 L632.5,195.2 L634.3,193.8 L636.2,192.3 L638.0,190.8 L639.9,189.2 L641.8,187.5 L643.6,185.8 L645.5,184.0 L647.4,182.2 L649.2,180.3 L651.1,178.4 L652.9,176.5 L654.8,174.5 L656.6,172.4 L658.5,170.4 L660.4,168.3 L662.2,166.1 L664.1,163.9 L665.9,161.7 L667.8,159.5 L669.7,157.3 L671.5,155.0 L673.4,152.7 L675.2,150.4 L677.1,148.0 L679.0,145.7 L680.8,143.3 L682.7,140.9 L684.5,138.6 L686.4,136.2 L688.2,133.8 L690.1,131.4 L692.0,129.0 L693.8,126.6 L695.7,124.3 L697.5,121.9 L699.4,119.6 L701.3,117.2 L703.1,114.9 L705.0,112.6 L706.8,110.3 L708.7,108.1 L710.6,105.8 L712.4,103.6 L714.3,101.5 L716.1,99.3 L718.0,97.2 L719.9,95.1 L721.7,93.1 L723.6,91.1 L725.4,89.2 L727.3,87.2 L729.1,85.4 L731.0,83.6 L732.9,81.8 L734.7,80.1 L736.6,78.4 L738.5,76.8 L740.3,75.3 L742.2,73.8 L744.0,72.4 L745.9,71.0 L747.7,69.7 L749.6,68.4 L751.5,67.2 L753.3,66.1 L755.2,65.1 L757.0,64.1 L758.9,63.2 L760.8,62.3 L762.6,61.6 L764.5,60.9 L766.3,60.2 L768.2,59.7 L770.0,59.2 L771.9,58.8 L773.8,58.5 L775.6,58.2 L777.5,58.0 L779.4,57.9 L781.2,57.9 L783.1,57.9 L784.9,58.0 L786.8,58.2 L788.6,58.5 L790.5,58.8 L792.4,59.2 L794.2,59.7 L796.1,60.2 L797.9,60.9 L799.8,61.6 L801.7,62.3 L803.5,63.2 L805.4,64.1 L807.2,65.1 L809.1,66.1 L811.0,67.2 L812.8,68.4 L814.7,69.7 L816.5,71.0 L818.4,72.4 L820.2,73.8 L822.1,75.3 L824.0,76.8 L825.8,78.4 L827.7,80.1 L829.5,81.8 L831.4,83.6 L833.3,85.4 L835.1,87.2 L837.0,89.2 L838.8,91.1 L840.7,93.1 L842.6,95.1 L844.4,97.2 L846.3,99.3 L848.1,101.5 L850.0,103.6 L851.9,105.8 L853.7,108.1 L855.6,110.3 L857.4,112.6 L859.3,114.9 L861.1,117.2 L863.0,119.6 L864.9,121.9 L866.7,124.3 L868.6,126.6 L870.5,129.0 L872.3,131.4 L874.2,133.8 L876.0,136.2 L877.9,138.6 L879.7,140.9 L881.6,143.3 L883.5,145.7 L885.3,148.0 L887.2,150.4 L889.0,152.7 L890.9,155.0 L892.8,157.3 L894.6,159.5 L896.5,161.7 L898.3,163.9 L900.2,166.1 L902.0,168.3 L903.9,170.4 L905.8,172.4 L907.6,174.5 L909.5,176.5 L911.4,178.4 L913.2,180.3 L915.1,182.2 L916.9,184.0 L918.8,185.8 L920.6,187.5 L922.5,189.2 L924.4,190.8 L926.2,192.3 L928.1,193.8 L929.9,195.2 L931.8,196.6 L933.7,197.9 L935.5,199.2 L937.4,200.3 L939.2,201.4 L941.1,202.5 L943.0,203.5 L944.8,204.4 L946.7,205.2 L948.5,206.0 L950.4,206.7 L952.2,207.3 L954.1,207.9 L956.0,208.4 L957.8,208.8 L959.7,209.1 L961.5,209.4 L963.4,209.6 L965.3,209.7 L967.1,209.7 L969.0,209.7 L970.8,209.6 L972.7,209.4 L974.6,209.1 L976.4,208.8 L978.3,208.4 L980.1,207.9 L982.0,207.3 L983.9,206.7 L985.7,206.0 L987.6,205.2 L989.4,204.4 L991.3,203.5 L993.1,202.5 L995.0,201.4 L996.9,200.3 L998.7,199.2 L1000.6,197.9 L1002.5,196.6 L1004.3,195.2 L1006.2,193.8 L1008.0,192.3 L1009.9,190.8 L1011.8,189.2 L1013.6,187.5 L1015.5,185.8 L1017.3,184.0 L1019.2,182.2 L1021.0,180.3 L1022.9,178.4 L1024.8,176.5 L1026.6,174.5 L1028.5,172.4 L1030.3,170.4 L1032.2,168.3 L1034.1,166.1 L1035.9,163.9 L1037.8,161.7 L1039.6,159.5 L1041.5,157.3 L1043.3,155.0 L1045.2,152.7 L1047.1,150.4 L1048.9,148.0 L1050.8,145.7 L1052.7,143.3 L1054.5,140.9 L1056.4,138.6 L1058.2,136.2 L1060.1,133.8 L1061.9,131.4 L1063.8,129.0 L1065.7,126.6 L1067.5,124.3 L1069.4,121.9 L1071.2,119.6 L1073.1,117.2 L1075.0,114.9 L1076.8,112.6 L1078.7,110.3 L1080.5,108.1 L1082.4,105.8 L1084.2,103.6 L1086.1,101.5 L1088.0,99.3 L1089.8,97.2 L1091.7,95.1 L1093.5,93.1 L1095.4,91.1 L1097.3,89.2 L1099.1,87.2 L1101.0,85.4 L1102.8,83.6 L1104.7,81.8 L1106.6,80.1 L1108.4,78.4 L1110.3,76.8 L1112.1,75.3 L1114.0,73.8 L1115.9,72.4 L1117.7,71.0 L1119.6,69.7 L1121.4,68.4 L1123.3,67.2 L1125.2,66.1 L1127.0,65.1 L1128.9,64.1 L1130.7,63.2 L1132.6,62.3 L1134.5,61.6 L1136.3,60.9 L1138.2,60.2 L1140.0,59.7 L1141.9,59.2 L1143.8,58.8 L1145.6,58.5 L1147.5,58.2 L1149.3,58.0 L1151.2,57.9 L1153.0,57.9 L1154.9,57.9 L1156.8,58.0 L1158.6,58.2 L1160.5,58.5 L1162.3,58.8 L1164.2,59.2 L1166.1,59.7 L1167.9,60.2 L1169.8,60.9 L1171.6,61.6 L1173.5,62.3 L1175.3,63.2 L1177.2,64.1 L1179.1,65.1 L1180.9,66.1 L1182.8,67.2 L1184.7,68.4 L1186.5,69.7 L1188.4,71.0 L1190.2,72.4 L1192.1,73.8 L1193.9,75.3 L1195.8,76.8 L1197.7,78.4 L1199.5,80.1 L1201.4,81.8 L1203.2,83.6 L1205.1,85.4 L1207.0,87.2 L1208.8,89.2 L1210.7,91.1 L1212.5,93.1 L1214.4,95.1 L1216.2,97.2 L1218.1,99.3 L1220.0,101.5 L1221.8,103.6 L1223.7,105.8 L1225.5,108.1 L1227.4,110.3 L1229.3,112.6 L1231.1,114.9 L1233.0,117.2 L1234.8,119.6 L1236.7,121.9 L1238.6,124.3 L1240.4,126.6 L1242.3,129.0 L1244.1,131.4 L1246.0,133.8" fill="none" stroke="#FFFFB4" stroke-width="1" shape-rendering="crispEdges"/><g fill="#E8E8E8" font-family="Liberation Sans" font-size="11"><text x="124" y="23.8" text-anchor="end">10.00 V</text><text x="124" y="52.05" text-anchor="end">7.500 V</text><text x="124" y="80.3" text-anchor="end">5.000 V</text><text x="124" y="108.55" text-anchor="end">2.500 V</text><text x="124" y="136.8" text-anchor="end">0.000 V</text><text x="124" y="165.05" text-anchor="end">-2.500 V</text><text x="124" y="193.3" text-anchor="end">-5.000 V</text><text x="124" y="221.55" text-anchor="end">-7.500 V</text><text x="124" y="249.8" text-anchor="end">-10.00 V</text><text x="131.0" y="262.8" text-anchor="middle">0.000ms</text><text x="316.92" y="262.8" text-anchor="middle">0.500ms</text><text x="502.83" y="262.8" text-anchor="middle">1.000ms</text><text x="688.75" y="262.8" text-anchor="middle">1.500ms</text><text x="874.67" y="262.8" text-anchor="middle">2.000ms</text><text x="1060.58" y="262.8" text-anchor="middle">2.500ms</text><text x="1246.5" y="262.8" text-anchor="middle">3.000ms</text></g><text x="11" y="30.5" fill="#3CC83C" font-family="Liberation Sans" font-size="11">A: is1_1</text><text x="11" y="46.5" fill="#E6E66E" font-family="Liberation Sans" font-size="11">B: q3_3</text></svg></div>
<div class="abs" style="left:1px;top:949px;width:1277px;height:2px;background:#F6F5EE"></div>
<div class="abs" style="left:0;top:672px;width:2px;height:301px;background:#A9A899"></div>
<svg class="abs" style="left:0;top:950px" width="1280" height="26">
  <line x1="0" y1="5.5" x2="1280" y2="5.5" stroke="#000" stroke-width="1"/>
  <path d="M10.5 5.5 L15 20.5 L92 20.5 L94.5 13 L97 20.5 L186 20.5 L190.5 5.5" fill="#ECE9D8" stroke="#000" stroke-width="1"/>
  <path d="M10.5 5.5 L15 20.5 L92 20.5 L96 5.5 Z" fill="#fff" stroke="#000" stroke-width="1"/>
  <text x="16.5" y="17" font-family="Liberation Sans" font-size="12" fill="#000" textLength="72.5" lengthAdjust="spacingAndGlyphs">Operating Point</text>
  <text x="99" y="17" font-family="Liberation Sans" font-size="12" fill="#000" textLength="84" lengthAdjust="spacingAndGlyphs">Transient Analysis</text>
</svg>
<div class="abs" style="left:0;top:976px;width:1280px;height:1px;background:#fff"></div>
<div class="abs" style="left:49px;top:977px;width:1px;height:16px;background:#ACA899"></div>
<div class="abs" style="left:51px;top:977px;width:1px;height:16px;background:#fff"></div>
<div id="taskbar" class="abs">
  <div class="abs" style="left:0;top:0;width:98px;height:30px;border-radius:0 10px 10px 0;background:linear-gradient(#3C9A3C 0%,#5DBA5D 12%,#3A9A3A 35%,#2F8F2F 70%,#2A7A2A 100%);box-shadow:inset -2px 0 3px rgba(0,0,0,.35)"></div>
  <svg class="abs" style="left:10px;top:6px" width="19" height="17">
    <path d="M1 2 Q4 0 8 2 L7 8 Q4 6 1 8 Z" fill="#E8502A"/>
    <path d="M10 2 Q14 4 18 2 L17 8 Q13 10 9 8 Z" fill="#6CBF2A"/>
    <path d="M1 9 Q4 7 7 9 L6 15 Q3 13 0 15 Z" fill="#2A7EE0"/>
    <path d="M8 9 Q12 11 16 9 L15 15 Q11 17 7 15 Z" fill="#F8C81A"/>
  </svg>
  <div class="abs" style="left:35px;top:5px;color:#fff;font-size:17px;font-weight:bold;font-style:italic;text-shadow:1px 1px 1px #1A4A1A">Start</div>
  <div class="abs" style="left:108px;top:3px;width:160px;height:25px;border-radius:3px;background:#1E48B8;box-shadow:inset 1px 1px 2px #0E2A7A"></div>
  <div class="abs" style="left:119px;top:8px"><svg  width="16" height="16">
<rect x="0" y="0" width="16" height="16" fill="#F4E4F4"/><rect x="0.5" y="0.5" width="15" height="15" fill="none" stroke="#D8A8D8"/>
<path d="M2 4.5 H10 M4.5 3 V13 M7.5 4.5 V13 M2 8.5 H7" stroke="#303030" stroke-width="1"/>
<circle cx="11.5" cy="4.5" r="2.6" fill="#D82020"/><circle cx="11.5" cy="11" r="2.8" fill="#1A2A90"/><circle cx="5" cy="12" r="2" fill="#20A020"/>
</svg></div>
  <div class="abs" style="left:138px;top:9px;color:#fff;font-size:11px">CircuitMaker</div>
  <div class="abs" style="left:271px;top:3px;width:156px;height:25px;border-radius:3px;background:linear-gradient(#4D8DF5,#3A78EC 20%,#3070E8 80%,#2A60D0)"></div>
  <svg class="abs" style="left:277px;top:7px" width="16" height="16">
<rect x="0.5" y="0.5" width="15" height="15" rx="1" fill="#141470"/><rect x="3" y="1" width="9" height="5" fill="#E8E8F0"/>
<rect x="2" y="8" width="12" height="7" fill="#fff"/><path d="M2 10 H14 M2 12.5 H14" stroke="#D02020" stroke-width="1.2"/></svg>
  <div class="abs" style="left:297px;top:9px;color:#fff;font-size:11px">Total Commander 6.5...</div>
  <div class="abs" style="left:1098px;top:9px;color:#fff;font-size:11px">HU</div>
  <div class="abs" style="left:1133px;top:0;width:147px;height:30px;background:linear-gradient(#1A8CE8 0%,#46B0F8 8%,#1496EC 25%,#1090E8 70%,#1078D0 100%);border-left:1px solid #0A5AB0"></div>
  <svg class="abs" style="left:1140px;top:5px" width="100" height="22">
<path d="M5 17 L19 17" stroke="#303030" stroke-width="1.5"/><path d="M6 16 L17 6 L19 8 L9 17 Z" fill="#30A030"/><path d="M8 15 L17 8" stroke="#E03030" stroke-width="1.5"/><path d="M10 15.5 L18 10" stroke="#2060E0" stroke-width="1.3"/><path d="M5 17 L9 13" stroke="#fff" stroke-width="1.2"/>
<path d="M30 3 L36 5 V11 Q36 16 30 19 Q24 16 24 11 V5 Z" fill="#C82020" stroke="#fff" stroke-width=".8"/><path d="M28 8.5 L32 12.5 M32 8.5 L28 12.5" stroke="#fff" stroke-width="1.6"/>
<path d="M42 9 H45 L49 5 V17 L45 13 H42 Z" fill="#F08A30" stroke="#803010" stroke-width=".8"/><path d="M51 7 Q53 11 51 15 M53 5 Q56 11 53 17" fill="none" stroke="#202040" stroke-width="1.2"/>
<circle cx="65" cy="10" r="6" fill="#B0B8C0" stroke="#606870"/><circle cx="65" cy="10" r="2" fill="#fff"/><path d="M66 17 L73 13" stroke="#D0E0F0" stroke-width="1.4"/>
<path d="M80 3 H86 L89 7 V14 L86 18 H80 L77 14 V7 Z" fill="#1A2AA0"/><path d="M81 7 L85 13 L83 15 V5 L85 8 L81 13" fill="none" stroke="#E02020" stroke-width="1.2"/>
</svg>
<div class="abs" style="left:1240px;top:9px;color:#fff;font-size:11px">12:53</div>
</div>
</body></html>
